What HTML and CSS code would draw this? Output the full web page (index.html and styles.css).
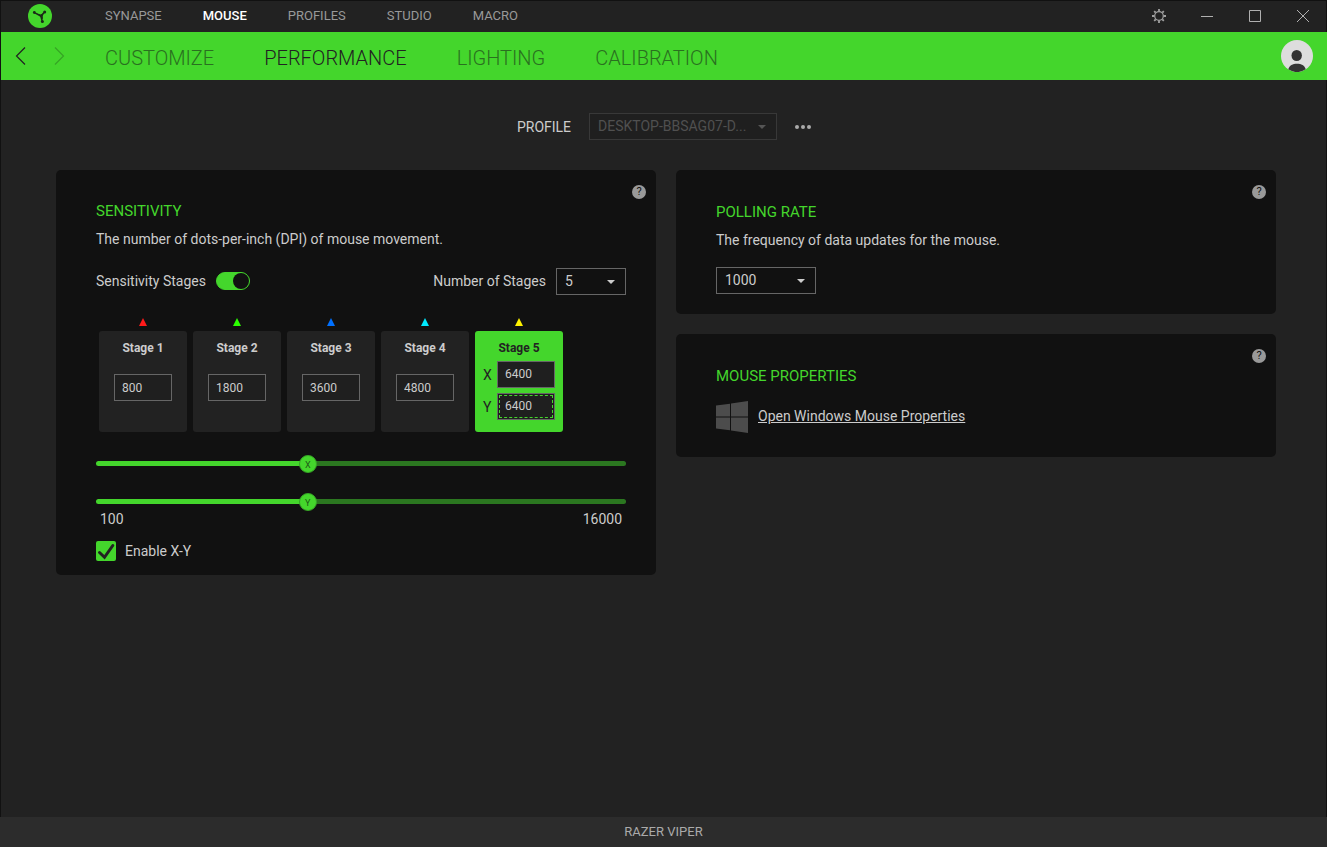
FILE: index.html
```html
<!DOCTYPE html>
<html lang="en">
<head>
<meta charset="utf-8">
<title>Mouse performance</title>
<link rel="stylesheet" href="styles.css">
</head>
<body>
<div class="app">
  <header class="titlebar">
    <svg class="logo" viewBox="0 0 24 24" aria-hidden="true">
      <circle cx="12" cy="12" r="12" fill="#44d62c"/>
      <g fill="none" stroke="#1b2a18" stroke-width="1.5" stroke-linecap="round">
        <path d="M12.8 12 6.400 8.600M12.800 12 16.600 8M12.800 12 14.400 17.600"/>
      </g>
      <g fill="#1b2a18"><path d="M9 9.600l3.600.8 3-.8-.8 2.600.2 3.200-2.200-2.400z"/><circle cx="6.300" cy="8.500" r="1.400"/><circle cx="16.700" cy="8" r="1.500"/><circle cx="14.400" cy="17.600" r="1.500"/></g>
    </svg>
    <nav class="tabs" aria-label="Modules">
      <a class="tab" href="#">SYNAPSE</a>
      <a class="tab tab-active" href="#">MOUSE</a>
      <a class="tab" href="#">PROFILES</a>
      <a class="tab" href="#">STUDIO</a>
      <a class="tab" href="#">MACRO</a>
    </nav>
    <div class="window-buttons">
      <button class="window-button" type="button" aria-label="Settings">
        <svg width="14" height="14" viewBox="0 0 14 14" fill="none" stroke="#a0a0a0"><circle cx="7" cy="7" r="4.3" stroke-width="1.2"/><path stroke-width="1.8" d="M7 0v2.4M7 11.6V14M0 7h2.4M11.6 7H14M2.2 2.2l1.5 1.5M10.3 10.3l1.5 1.5M2.2 11.8l1.5-1.5M10.3 3.7l1.5-1.5"/></svg>
      </button>
      <button class="window-button" type="button" aria-label="Minimize">
        <svg width="12" height="12" viewBox="0 0 12 12" stroke="#b0b0b0"><path d="M0 6.5h12"/></svg>
      </button>
      <button class="window-button" type="button" aria-label="Maximize">
        <svg width="12" height="12" viewBox="0 0 12 12" fill="none" stroke="#b0b0b0"><path d="M.5.5h11v11H.5z"/></svg>
      </button>
      <button class="window-button" type="button" aria-label="Close">
        <svg width="14" height="14" viewBox="0 0 14 14" stroke="#b0b0b0"><path d="M1 1l12 12M13 1L1 13"/></svg>
      </button>
    </div>
  </header>

  <div class="subbar">
    <div class="history">
      <button class="history-button" type="button" aria-label="Back">
        <svg width="12" height="18" viewBox="0 0 12 18" fill="none" stroke="#222" stroke-width="1.2"><path d="M10 .5 1.5 9l8.500 8.500"/></svg>
      </button>
      <button class="history-button" type="button" aria-label="Forward" disabled>
        <svg width="12" height="18" viewBox="0 0 12 18" fill="none" stroke="#36a425" stroke-width="1.2"><path d="M2 .5 10.500 9 2 17.500"/></svg>
      </button>
    </div>
    <nav class="pages" aria-label="Mouse pages">
      <a class="page" href="#">CUSTOMIZE</a>
      <a class="page page-active" href="#">PERFORMANCE</a>
      <a class="page" href="#">LIGHTING</a>
      <a class="page" href="#">CALIBRATION</a>
    </nav>
    <button class="avatar" type="button" aria-label="Account">
      <svg width="32" height="32" viewBox="0 0 32 32"><circle cx="16" cy="16" r="16" fill="#ddd"/><ellipse cx="15.700" cy="15.500" rx="5.200" ry="5.600" fill="#333"/><path d="M7.300 29.300c1-4 4.500-5.600 8.700-5.600s7.700 1.600 8.700 5.600A16 16 0 0 1 7.300 29.300z" fill="#333"/></svg>
    </button>
  </div>

  <main class="content">
    <div class="profile">
      <label class="profile-label" for="profile">PROFILE</label>
      <div class="select select-profile">
        <select id="profile" disabled><option>DESKTOP-BBSAG07-D...</option></select>
        <svg class="caret" viewBox="0 0 8 4" aria-hidden="true"><path d="M0 0h8L4 4z"/></svg>
      </div>
      <button class="more" type="button" aria-label="More">
        <svg width="16" height="4" viewBox="0 0 16 4" fill="#aaa"><circle cx="2" cy="2" r="2"/><circle cx="8" cy="2" r="2"/><circle cx="14" cy="2" r="2"/></svg>
      </button>
    </div>

    <div class="columns">
      <section class="card card-sensitivity">
        <button class="help" type="button" aria-label="Sensitivity help">?</button>
        <h2 class="card-title">SENSITIVITY</h2>
        <p class="card-text">The number of dots-per-inch (DPI) of mouse movement.</p>
        <div class="options">
          <label class="option" for="stages-on">Sensitivity Stages
            <input class="toggle" id="stages-on" type="checkbox" role="switch" checked>
          </label>
          <div class="option">
            <label for="stage-count">Number of Stages</label>
            <div class="select select-count">
              <select id="stage-count"><option>5</option></select>
              <svg class="caret" viewBox="0 0 8 4" aria-hidden="true"><path d="M0 0h8L4 4z"/></svg>
            </div>
          </div>
        </div>

        <div class="stages">
          <div class="stage-column">
            <svg class="marker marker-red" viewBox="0 0 8 8" aria-hidden="true"><path d="M4 0l4 8H0z"/></svg>
            <div class="stage"><label class="stage-name" for="s1">Stage 1</label><div class="stage-values"><input class="dpi" id="s1" type="text" value="800"></div></div>
          </div>
          <div class="stage-column">
            <svg class="marker marker-green" viewBox="0 0 8 8" aria-hidden="true"><path d="M4 0l4 8H0z"/></svg>
            <div class="stage"><label class="stage-name" for="s2">Stage 2</label><div class="stage-values"><input class="dpi" id="s2" type="text" value="1800"></div></div>
          </div>
          <div class="stage-column">
            <svg class="marker marker-blue" viewBox="0 0 8 8" aria-hidden="true"><path d="M4 0l4 8H0z"/></svg>
            <div class="stage"><label class="stage-name" for="s3">Stage 3</label><div class="stage-values"><input class="dpi" id="s3" type="text" value="3600"></div></div>
          </div>
          <div class="stage-column">
            <svg class="marker marker-cyan" viewBox="0 0 8 8" aria-hidden="true"><path d="M4 0l4 8H0z"/></svg>
            <div class="stage"><label class="stage-name" for="s4">Stage 4</label><div class="stage-values"><input class="dpi" id="s4" type="text" value="4800"></div></div>
          </div>
          <div class="stage-column">
            <svg class="marker marker-yellow" viewBox="0 0 8 8" aria-hidden="true"><path d="M4 0l4 8H0z"/></svg>
            <div class="stage stage-active">
              <span class="stage-name">Stage 5</span>
              <div class="stage-axes">
                <label class="axis" for="s5x">X <input class="dpi" id="s5x" type="text" value="6400"></label>
                <label class="axis" for="s5y">Y <input class="dpi dpi-focused" id="s5y" type="text" value="6400"></label>
              </div>
            </div>
          </div>
        </div>

        <div class="sliders">
          <div class="slider" style="--ratio: 0.396">
            <input class="range" id="range-x" type="range" min="100" max="16000" step="100" value="6400">
            <label class="range-letter" for="range-x">X</label>
          </div>
          <div class="slider" style="--ratio: 0.396">
            <input class="range" id="range-y" type="range" min="100" max="16000" step="100" value="6400">
            <label class="range-letter" for="range-y">Y</label>
          </div>
        </div>
        <div class="limits"><span>100</span><span>16000</span></div>
        <label class="enable" for="enable-xy">
          <span class="check">
            <input class="check-input" id="enable-xy" type="checkbox" checked>
            <svg class="check-mark" viewBox="0 0 20 20" aria-hidden="true"><path d="M3.500 11.500l5 4.800L16.800 4.500" fill="none" stroke="#222" stroke-width="3" stroke-linecap="round"/></svg>
          </span>
          Enable X-Y
        </label>
      </section>

      <div class="side">
        <section class="card card-polling">
          <button class="help" type="button" aria-label="Polling rate help">?</button>
          <h2 class="card-title">POLLING RATE</h2>
          <label class="card-text" for="polling">The frequency of data updates for the mouse.</label>
          <div class="select select-polling">
            <select id="polling"><option>1000</option></select>
            <svg class="caret" viewBox="0 0 8 4" aria-hidden="true"><path d="M0 0h8L4 4z"/></svg>
          </div>
        </section>
        <section class="card card-properties">
          <button class="help" type="button" aria-label="Mouse properties help">?</button>
          <h2 class="card-title">MOUSE PROPERTIES</h2>
          <div class="properties">
            <svg width="32" height="32" viewBox="0 0 32 32" fill="#4c4c4c" aria-hidden="true"><path d="M0 4.600 14 2.800V15.500H0zM15 2.600 32 0V15.500H15zM0 16.500h14v12.800L0 27.500zM15 16.500h17V32l-17-2.500z"/></svg>
            <a class="link" href="#">Open Windows Mouse Properties</a>
          </div>
        </section>
      </div>
    </div>
  </main>

  <footer class="footer">RAZER VIPER</footer>
</div>
</body>
</html>
```
FILE: styles.css
```css
*, *::before, *::after { box-sizing: border-box; }

body {
  margin: 0;
  background: #222;
  color: #ccc;
  font: 14px/20px Roboto, "Liberation Sans", sans-serif;
}

button, input, select { font: inherit; color: inherit; }

button {
  padding: 0;
  border: 0;
  background: none;
  cursor: pointer;
}

.app {
  display: flex;
  flex-direction: column;
  min-height: 100vh;
}

/* Title bar */
.titlebar {
  display: flex;
  align-items: center;
  height: 32px;
  box-shadow: inset 0 1px #111, inset 1px 0 #111, inset -1px 0 #111;
}

.logo {
  width: 24px;
  height: 24px;
  margin: 0 53px 0 28px;
}

.tabs { display: flex; gap: 41px; }

.tab {
  color: #999;
  font-size: 13px;
  text-decoration: none;
}

.tab-active { color: #fff; font-weight: 500; }

.window-buttons { display: flex; margin-left: auto; }

.window-button {
  display: grid;
  place-items: center;
  width: 48px;
  height: 32px;
}

/* Page bar */
.subbar {
  display: flex;
  align-items: center;
  height: 48px;
  padding-right: 14px;
  border-left: 1px solid #111;
  background: #44d62c;
}

.history { display: flex; width: 104px; padding-left: 14px; gap: 26px; }

.history-button { display: flex; }

.pages { display: flex; gap: 50px; padding-top: 3px; }

.page {
  color: #2a7020;
  font-size: 20px;
  font-weight: 300;
  line-height: 24px;
  text-decoration: none;
}

.page-active { color: #222; }

.avatar { display: flex; margin-left: auto; }

/* Content */
.content {
  flex: 1;
  padding: 33px 50px 30px 55px;
  border: 1px solid #111;
  border-width: 0 1px;
}

.profile {
  display: flex;
  align-items: center;
  justify-content: center;
  gap: 18px;
  margin-bottom: 30px;
  padding-right: 4px;
}

.more { display: flex; }

.select { position: relative; }

.select select {
  display: block;
  width: 100%;
  height: 27px;
  padding: 0 24px 2px 8px;
  border: 1px solid #666;
  border-radius: 0;
  background: #111;
  appearance: none;
  text-overflow: ellipsis;
}

.select select:disabled {
  border-color: #383838;
  background: #1f1f1f;
  color: #505050;
  opacity: 1;
}

.caret {
  position: absolute;
  top: 12px;
  right: 11px;
  width: 8px;
  height: 4px;
  fill: #ccc;
  pointer-events: none;
}

.select-profile { width: 188px; }
.select-profile .caret { fill: #555; }
.select-count { width: 70px; }
.select-polling { width: 100px; }

.columns {
  display: grid;
  grid-template-columns: 1fr 1fr;
  align-items: start;
  gap: 20px;
}

.side { display: grid; gap: 20px; }

.card {
  position: relative;
  border-radius: 5px;
  background: #111;
}

.card-sensitivity { padding: 30px 30px 14px 40px; }
.card-polling { padding: 31px 40px 20px; }
.card-properties { padding: 31px 40px 24px; }

.card-title {
  margin: 0 0 7px;
  color: #44d62c;
  font-size: 15px;
  font-weight: 400;
  line-height: 22px;
}

.card-text { display: block; margin: 0 0 17px; }

.help {
  position: absolute;
  top: 15px;
  right: 10px;
  width: 14px;
  height: 14px;
  border-radius: 50%;
  background: #999;
  color: #111;
  font-size: 11px;
  line-height: 14px;
}

.options {
  display: flex;
  align-items: center;
  justify-content: space-between;
  margin-top: 19px;
}

.option { display: flex; align-items: center; gap: 10px; }

label.option { padding-bottom: 2px; }

.toggle {
  width: 34px;
  height: 18px;
  margin: 0;
  border: 1px solid #44d62c;
  border-radius: 9px;
  background: #44d62c;
  appearance: none;
}

.toggle::before {
  content: "";
  display: block;
  width: 16px;
  height: 16px;
  border-radius: 50%;
  background: #111;
}

.toggle:checked::before { margin-left: auto; }

.option > label { padding-bottom: 2px; }

/* Stages */
.stages {
  display: flex;
  gap: 6px;
  margin: 23px 3px 0;
}

.stage-column {
  display: flex;
  flex-direction: column;
  align-items: center;
  gap: 5px;
  width: 88px;
}

.marker { width: 8px; height: 8px; }
.marker-red { fill: #ff1a1a; }
.marker-green { fill: #2bff00; }
.marker-blue { fill: #0070ff; }
.marker-cyan { fill: #00eaff; }
.marker-yellow { fill: #fff200; }

.stage {
  width: 100%;
  height: 101px;
  padding-top: 9px;
  border-radius: 3px;
  background: #222;
  text-align: center;
}

.stage-active { background: #44d62c; color: #222; }

.stage-name {
  display: block;
  font-size: 12px;
  font-weight: 700;
  line-height: 16px;
}

.stage-values { display: flex; justify-content: center; padding-top: 18px; }

.stage-axes { display: grid; gap: 5px; padding: 5px 8px 0; }

.axis {
  display: flex;
  align-items: center;
  justify-content: space-between;
}

.dpi {
  width: 58px;
  height: 27px;
  padding: 0 7px;
  border: 1px solid #666;
  background: #1f1f1f;
  color: #ccc;
  font-size: 12px;
}

.axis .dpi { padding-bottom: 2px; }

.dpi-focused { outline: 1px dashed #44d62c; outline-offset: -3px; }

/* Sliders */
.sliders { display: grid; gap: 20px; margin: 22px 0 1px; }

.slider { position: relative; height: 18px; }

.range {
  display: block;
  width: 100%;
  height: 18px;
  margin: 0;
  background: none;
  appearance: none;
}

.range::-webkit-slider-runnable-track {
  height: 5px;
  border-radius: 3px;
  background: linear-gradient(to right, #44d62c calc(var(--ratio) * 100%), #2b7720 calc(var(--ratio) * 100%));
}

.range::-webkit-slider-thumb {
  width: 18px;
  height: 18px;
  margin-top: -6px;
  border: 1px solid #36a425;
  border-radius: 50%;
  background: #44d62c;
  appearance: none;
}

.range-letter {
  position: absolute;
  top: 2px;
  left: calc((100% - 18px) * var(--ratio));
  width: 18px;
  color: #1f5a17;
  font-size: 9px;
  line-height: 18px;
  text-align: center;
  pointer-events: none;
}

.limits {
  display: flex;
  justify-content: space-between;
  padding: 0 4px;
  line-height: 16px;
}

.enable {
  display: flex;
  align-items: center;
  gap: 9px;
  margin-top: 14px;
}

.check { position: relative; width: 20px; height: 20px; }

.check-input {
  display: block;
  width: 20px;
  height: 20px;
  margin: 0;
  border-radius: 2px;
  background: #44d62c;
  appearance: none;
}

.check-mark {
  position: absolute;
  inset: 0;
  pointer-events: none;
}

.properties {
  display: flex;
  align-items: center;
  gap: 10px;
  margin-top: 14px;
}

.link { padding-bottom: 2px; color: #ccc; }

.footer {
  height: 30px;
  background: #2c2c2c;
  color: #aaa;
  font-size: 13px;
  line-height: 30px;
  text-align: center;
}
```
